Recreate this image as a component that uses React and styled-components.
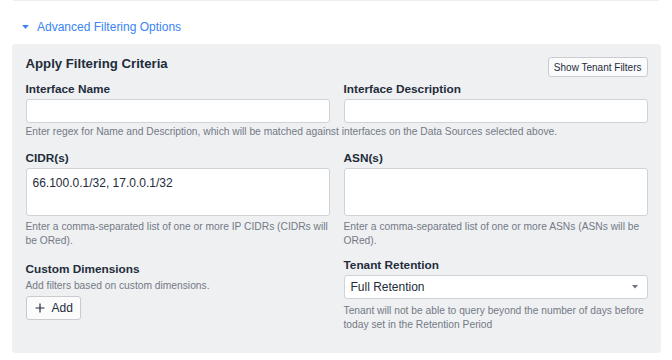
import React from 'react';
import styled, { createGlobalStyle } from 'styled-components';

const GlobalStyle = createGlobalStyle`
  body {
    margin: 0;
    background: #ffffff;
    font-family: "Liberation Sans", Arial, sans-serif;
    color: #232c3a;
  }
  * { box-sizing: border-box; }
`;

const Page = styled.div`
  width: 672px;
  height: 360px;
  overflow: hidden;
  padding: 0 11px 0 12px;
`;

const TopEdge = styled.div`
  height: 1px;
  margin: 0 2px 0 1px;
  background: #eceef1;
`;

const Disclosure = styled.button`
  display: flex;
  align-items: center;
  gap: 8px;
  height: 16px;
  margin: 18px 0 0 10px;
  padding: 0;
  border: none;
  background: none;
  color: #3a84f4;
  font-family: inherit;
  font-size: 12px;
  line-height: 16px;
  cursor: pointer;
`;

const Panel = styled.section`
  margin-top: 9px;
  height: 309px;
  padding: 11px 13.5px 0;
  background: #eff0f2;
  border-radius: 4px;
`;

const PanelHeader = styled.div`
  display: flex;
  justify-content: space-between;
  align-items: flex-start;
  height: 22px;
`;

const Title = styled.h2`
  margin: 1px 0 0;
  font-size: 13.2px;
  line-height: 16px;
  font-weight: 700;
  color: #232c3a;
`;

const SmallButton = styled.button`
  display: inline-flex;
  align-items: center;
  justify-content: center;
  gap: 7px;
  margin-top: ${p => (p.$tall ? 0 : 2)}px;
  height: ${p => (p.$tall ? 24 : 20)}px;
  padding: ${p => (p.$tall ? '0 7px 0 8px' : '0 5px')};
  background: #fbfbfc;
  border: 1px solid #c8cbd0;
  border-radius: 3px;
  font-family: inherit;
  font-size: ${p => (p.$tall ? 12 : 10)}px;
  color: #232c3a;
  cursor: pointer;
`;

const Grid = styled.div`
  display: grid;
  grid-template-columns: 304px 304px;
  column-gap: 14px;
  align-items: start;
`;

const Field = styled.div`
  display: flex;
  flex-direction: column;
  margin-top: ${p => p.$mt || 0}px;
`;

const Label = styled.label`
  margin-bottom: 2px;
  font-size: 11.8px;
  line-height: 15px;
  font-weight: 700;
  color: #232c3a;
`;

const Input = styled.input`
  height: 24px;
  background: #fff;
  border: 1px solid #cfd2d6;
  border-radius: 3px;
`;

const TextArea = styled.textarea`
  height: 47.5px;
  padding: 7px 6px;
  resize: none;
  background: #fff;
  border: 1px solid #cfd2d6;
  border-radius: 3px;
  font-family: inherit;
  font-size: 12px;
  line-height: 15px;
  color: #232c3a;
`;

const Help = styled.p`
  margin: ${p => p.$mt ?? 4}px 0 0;
  font-size: 10.25px;
  line-height: 14px;
  color: #737a86;
  grid-column: ${p => (p.$span ? '1 / -1' : 'auto')};
`;

const Select = styled.div`
  display: flex;
  align-items: center;
  justify-content: space-between;
  height: 24px;
  padding: 0 9px 0 6px;
  background: #fff;
  border: 1px solid #cfd2d6;
  border-radius: 3px;
  font-size: 12px;
  color: #232c3a;
`;

const Caret = ({ color, w, h }) => (
  <svg width={w} height={h} viewBox="0 0 10 6">
    <path d="M0 0h10L5 6z" fill={color} />
  </svg>
);

const Plus = () => (
  <svg width="10" height="10" viewBox="0 0 10 10">
    <path d="M5 0.5v9M0.5 5h9" stroke="#232c3a" strokeWidth="1.2" />
  </svg>
);

export default function App() {
  return (
    <Page>
      <GlobalStyle />
      <TopEdge />
      <Disclosure>
        <Caret color="#3a84f4" w={7} h={4} />
        Advanced Filtering Options
      </Disclosure>
      <Panel>
        <PanelHeader>
          <Title>Apply Filtering Criteria</Title>
          <SmallButton>Show Tenant Filters</SmallButton>
        </PanelHeader>
        <Grid>
          <Field $mt={4.5}>
            <Label>Interface Name</Label>
            <Input />
          </Field>
          <Field $mt={4.5}>
            <Label>Interface Description</Label>
            <Input />
          </Field>
          <Help $span $mt={2}>
            Enter regex for Name and Description, which will be matched against interfaces on the Data Sources selected above.
          </Help>
          <Field $mt={12.5}>
            <Label>CIDR(s)</Label>
            <TextArea defaultValue="66.100.0.1/32, 17.0.0.1/32" />
            <Help>Enter a comma-separated list of one or more IP CIDRs (CIDRs will be ORed).</Help>
          </Field>
          <Field $mt={12.5}>
            <Label>ASN(s)</Label>
            <TextArea />
            <Help>Enter a comma-separated list of one or more ASNs (ASNs will be ORed).</Help>
          </Field>
          <Field $mt={14}>
            <Label>Custom Dimensions</Label>
            <Help $mt={0}>Add filters based on custom dimensions.</Help>
            <div style={{ marginTop: 3 }}>
              <SmallButton $tall>
                <Plus />
                Add
              </SmallButton>
            </div>
          </Field>
          <Field $mt={10.5}>
            <Label>Tenant Retention</Label>
            <Select>
              Full Retention
              <Caret color="#6b7280" w={6} h={3.6} />
            </Select>
            <Help $mt={5}>
              Tenant will not be able to query beyond the number of days before today set in the Retention Period
            </Help>
          </Field>
        </Grid>
      </Panel>
    </Page>
  );
}
